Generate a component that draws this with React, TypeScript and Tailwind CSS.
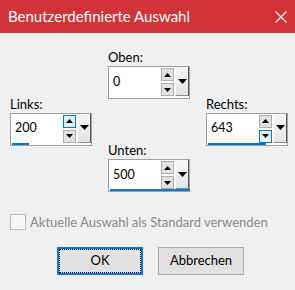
import React from "react";

const FONT = "font-['Lato',sans-serif]";

function Tri({ dir, w = 7, h = 4 }: { dir: "up" | "down"; w?: number; h?: number }) {
  return (
    <svg width={w} height={h} viewBox={`0 0 ${w} ${h}`}>
      <path d={dir === "up" ? `M0 ${h} L${w / 2} 0 L${w} ${h} Z` : `M0 0 L${w} 0 L${w / 2} ${h} Z`} fill="#000" />
    </svg>
  );
}

function SpinBtn({ dir, hot }: { dir: "up" | "down"; hot?: boolean }) {
  return (
    <div
      className={`flex h-[13px] items-center justify-center border ${
        hot ? "border-[#0078d7] bg-[#e5f1fb]" : "border-[#adadad] bg-[#e1e1e1]"
      }`}
    >
      <Tri dir={dir} w={7} h={4} />
    </div>
  );
}

function SpinField({
  label,
  value,
  bar,
  hot,
}: {
  label: string;
  value: string;
  bar: number;
  hot?: "up" | "down";
}) {
  return (
    <div className="flex flex-col">
      <span className="h-[18px] leading-[18px] text-black">{label}</span>
      <div className="flex h-[33px] w-[82px] flex-col border border-[#a0a0a0] bg-white">
        <div className="flex flex-1">
          <div className="flex flex-1 items-center pl-[4px] pt-[1px] text-[12.5px] text-black">{value}</div>
          <div className="mr-[1px] flex w-[13px] flex-col gap-[2px] pt-[1px]">
            <SpinBtn dir="up" hot={hot === "up"} />
            <SpinBtn dir="down" hot={hot === "down"} />
          </div>
          <div className="flex w-[14px] items-center justify-center border-l border-white border-r border-b border-r-[#5a5a5a] border-b-[#8a8a8a] bg-gradient-to-b from-[#f6f6f6] to-[#e4e4e4]">
            <Tri dir="down" w={9} h={5} />
          </div>
        </div>
        <div className="h-[3px] px-[1px]">
          <div className="h-full bg-[#0078d7]" style={{ width: bar }} />
        </div>
      </div>
    </div>
  );
}

export default function App() {
  return (
    <div className={`h-[290px] w-[295px] bg-[#f0f0f0] text-[13px] ${FONT}`}>
      {/* Title bar */}
      <div className="flex h-[33px] items-center justify-between bg-[#d13438] pl-[8px] pr-[8px] text-white">
        <span className="text-[15px]">Benutzerdefinierte Auswahl</span>
        <svg width="12" height="12" viewBox="0 0 12 12">
          <path d="M0.5 0.5 L11.5 11.5 M11.5 0.5 L0.5 11.5" stroke="#fff" strokeWidth="1.1" />
        </svg>
      </div>

      {/* Fields */}
      <div className="flex items-center gap-[16px] pl-[10px] pt-[15px]">
        <SpinField label="Links:" value="200" bar={17} hot="up" />
        <div className="flex flex-col gap-[42px]">
          <SpinField label="Oben:" value="0" bar={0} />
          <SpinField label="Unten:" value="500" bar={80} />
        </div>
        <SpinField label="Rechts:" value="643" bar={58} hot="down" />
      </div>

      {/* Checkbox */}
      <div className="mt-[22px] flex items-center gap-[4px] whitespace-nowrap pl-[10px] text-[#8a8a8a]">
        <span className="h-[16px] w-[16px] shrink-0 border border-[#bcbcbc] bg-[#f6f6f6]" />
        <span className="leading-[16px]">Aktuelle Auswahl als Standard verwenden</span>
      </div>

      {/* Buttons */}
      <div className="mt-[17px] flex gap-[15px] pl-[57px]">
        <button className="flex h-[28px] w-[86px] items-center justify-center border-2 border-[#0078d7] bg-[#e1e1e1] text-[13px] text-black">
          <span className="flex h-full w-full items-center justify-center border border-dotted border-black">OK</span>
        </button>
        <button className="flex h-[28px] w-[86px] items-center justify-center border border-[#adadad] bg-[#e1e1e1] text-[13px] text-black">
          Abbrechen
        </button>
      </div>
    </div>
  );
}
